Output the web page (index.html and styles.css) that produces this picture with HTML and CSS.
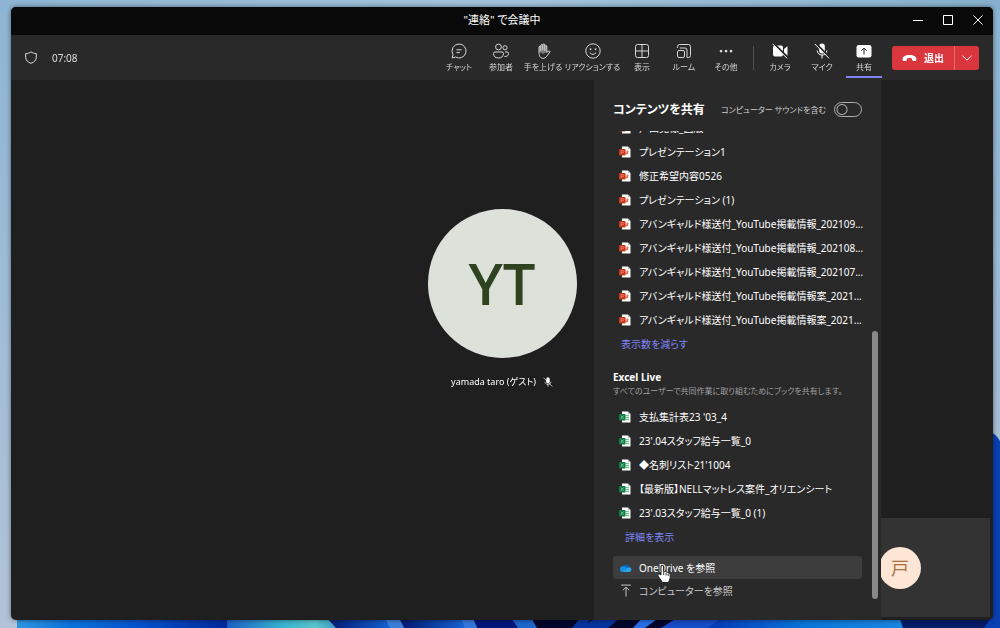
FILE: index.html
```html
<!DOCTYPE html>
<html lang="ja">
<head>
<meta charset="utf-8">
<meta name="viewport" content="width=device-width, initial-scale=1">
<title>"連絡" で会議中</title>
<link rel="stylesheet" href="styles.css">
</head>
<body>
<svg class="wallpaper" viewBox="0 0 1000 628" preserveAspectRatio="none" aria-hidden="true">
  <defs>
    <linearGradient id="sky" x1="0" y1="0" x2="0" y2="1"><stop offset="0" stop-color="#8db5d3"/><stop offset="1" stop-color="#b2c3d8"/></linearGradient>
    <linearGradient id="top" x1="0" y1="0" x2="1" y2="0"><stop offset="0" stop-color="#8db5d3"/><stop offset=".5" stop-color="#a3c3dc"/><stop offset="1" stop-color="#86b0cd"/></linearGradient>
    <linearGradient id="b1" x1="0" y1="0" x2="1" y2="0"><stop offset="0" stop-color="#2f97e0"/><stop offset=".25" stop-color="#0a72dc"/><stop offset=".6" stop-color="#0550cc"/><stop offset="1" stop-color="#02289a"/></linearGradient>
    <linearGradient id="b2" x1="0" y1="0" x2="1" y2="0"><stop offset="0" stop-color="#1d5fc4"/><stop offset=".5" stop-color="#37b2d0"/><stop offset=".8" stop-color="#5ac4cc"/><stop offset="1" stop-color="#389cc4"/></linearGradient>
    <linearGradient id="b3" x1="0" y1="0" x2="1" y2="0"><stop offset="0" stop-color="#02156c"/><stop offset="1" stop-color="#1766d8"/></linearGradient>
    <linearGradient id="b4" x1="0" y1="0" x2="1" y2="0"><stop offset="0" stop-color="#0638b8"/><stop offset=".5" stop-color="#0a76da"/><stop offset="1" stop-color="#1a86e0"/></linearGradient>
  </defs>
  <path fill="url(#sky)" d="M0 0h1000v628H0z"/>
  <path fill="url(#top)" d="M0 0h1000v10H0z"/>
  <path fill="url(#b1)" d="M17 616h211v12H17z"/>
  <path fill="url(#b2)" d="M227 616h110v12H227z"/>
  <path fill="url(#b3)" d="M325 616h62l6 12h-57z"/>
  <path fill="#3c80dc" d="M384 616h14l6 12h-14z"/>
  <path fill="url(#b3)" d="M398 616h64l5 12h-63z"/>
  <path fill="#3578dc" d="M460 616h12l5 12h-12z"/>
  <path fill="#02167c" d="M472 616h40l8 12h-43z"/>
  <path fill="#1e65cc" d="M510 616h20l8 12h-20z"/>
  <path fill="#01062c" d="M530 616h195l-10 12H537z"/>
  <path fill="#06349f" d="M582 616h12l-12 12h-10zM600 616h22l-14 12h-30z"/>
  <path fill="#286fe6" d="M644 616h17l-16 12h-12z"/>
  <path fill="#174bca" d="M680 616h47l-16 12h-50z"/>
  <path fill="url(#b4)" d="M724 616h175l6 12H708z"/>
  <path fill="#041b68" d="M899 616h101v12h-97z"/>
  <path fill="#0a40b4" d="M988 430q8 4 12 11v187h-16l8-12z"/>
</svg>

<div class="window">
  <header class="titlebar">
    <h1 class="title">"連絡" で会議中</h1>
    <div class="window-buttons">
      <button class="winbtn" aria-label="最小化"><svg viewBox="0 0 10 10"><path d="M0 5.500h10"/></svg></button>
      <button class="winbtn" aria-label="最大化"><svg viewBox="0 0 10 10"><path d="M.5.500h9v9h-9z"/></svg></button>
      <button class="winbtn" aria-label="閉じる"><svg viewBox="0 0 10 10"><path d="M.5.500l9 9M9.500.500l-9 9"/></svg></button>
    </div>
  </header>

  <div class="toolbar">
    <div class="status">
      <svg class="shield" viewBox="0 0 12 13" aria-hidden="true"><path d="M6 .8C7.500 2 9.200 2.500 11.300 2.600V6.200C11.300 9.200 9.300 11.300 6 12.300 2.700 11.300.7 9.200.7 6.200V2.600C2.800 2.500 4.500 2 6 .8z"/></svg>
      <span class="timer">07:08</span>
    </div>
    <nav class="tools">
      <button class="tool"><svg viewBox="0 0 16 16"><path d="M8 1a7 7 0 1 1-3.400 13.100L1.200 15l.8-3.400A7 7 0 0 1 8 1zM5.500 6.800h5M5.500 9.500h3.300"/></svg>チャット</button>
      <button class="tool"><svg viewBox="0 0 16 16"><circle cx="5.500" cy="4" r="2.900"/><circle cx="12" cy="4.800" r="2.100"/><path d="M2 9h7q1.500 0 1.500 1.500C10.500 13.200 8.800 15 5.500 15S.5 13.200.5 10.500Q.5 9 2 9zM12 9h2q1.500 0 1.500 1.300c0 2.200-1.500 3.500-4 3.200"/></svg>参加者</button>
      <button class="tool"><svg viewBox="0 0 16 16"><path class="soft" d="M4 9V3.800q.9-1.300 1.800 0V2.200q1-1.400 2 0V1.500q1-1.200 2 0v1.600q1-1.200 2 0v6.200L8 11z"/><path d="M4 9V3.800q.9-1.300 1.800 0V8M5.800 4V2.200q1-1.400 2 0V7.500M7.800 2V1.500q1-1.200 2 0V8M9.800 3.100q1-1.200 2 0v6.200l1.300-1q1-.6 2 .3l-3.600 5q-1 1.700-3.500 1.700C5.300 15.300 4 13 4 9"/></svg>手を上げる</button>
      <button class="tool tool-wide"><svg viewBox="0 0 16 16"><circle cx="8" cy="8" r="7.200"/><path d="M4.800 9.600q3.200 3.500 6.400 0"/><path class="fill" d="M5.500 5.200a.9.9 0 1 0 .1 0zM10.500 5.200a.9.9 0 1 0 .1 0z"/></svg>リアクションする</button>
      <button class="tool"><svg viewBox="0 0 16 16"><rect x="1.500" y="1.500" width="13" height="13" rx="2"/><path d="M8 1.500v13M1.500 8h13"/></svg>表示</button>
      <button class="tool"><svg viewBox="0 0 16 16"><path d="M1.500 5V3.500q0-2 2-2h9q2 0 2 2v9q0 2-2 2H11"/><rect x="1.500" y="7.500" width="7" height="7" rx="1.500"/><path d="M3.800 5h5.200q2 0 2 2v7.500"/></svg>ルーム</button>
      <button class="tool"><svg viewBox="0 0 16 16"><path class="fill" d="M3 6.700a1.400 1.400 0 1 0 .1 0zM8 6.700a1.400 1.400 0 1 0 .1 0zM13 6.700a1.400 1.400 0 1 0 .1 0z"/></svg>その他</button>
      <span class="divider"></span>
      <button class="tool"><svg viewBox="0 0 16 16"><path class="fill" d="M3 2.500h6q2 0 2 2v7q0 2-2 2H3q-2 0-2-2v-7q0-2 2-2zM12 6l3.500-2.700v9.400L12 10z"/><path class="cut" d="M1.500.2l14.300 14.300"/><path d="M.5.800l14.500 14.500"/></svg>カメラ</button>
      <button class="tool"><svg viewBox="0 0 16 16"><path class="fill" d="M8 .5a2.800 2.800 0 0 1 2.800 2.800v4.400a2.800 2.800 0 0 1-5.600 0V3.300A2.800 2.800 0 0 1 8 .5z"/><path d="M3.200 7.500c0 6 9.600 6 9.600 0M8 12v3.500"/><path class="cut" d="M1.700.2l14 14.300"/><path d="M.8 1l14.200 14.300"/></svg>マイク</button>
      <button class="tool active"><svg viewBox="0 0 16 16"><rect class="fill" x=".5" y="2" width="15" height="12.500" rx="2.300"/><path class="dark" d="M8 11.500V5.300M5.300 7.800L8 5.100l2.700 2.700"/></svg>共有</button>
    </nav>
    <div class="leave-group">
      <button class="leave"><svg viewBox="0 0 16 8" aria-hidden="true"><path d="M8 .8c4.800 0 7.500 1.900 7.400 4.600 0 1.400-.7 2-1.800 1.800l-1.900-.4c-.7-.1-1-.5-1.100-1.200l-.2-1.300q-2.400-.8-4.800 0l-.2 1.300c-.1.700-.4 1.100-1.100 1.200l-1.900.4C1.300 7.400.6 6.800.6 5.400.5 2.700 3.200.8 8 .8z"/></svg>退出</button>
      <button class="leave-more" aria-label="退出オプション"><svg viewBox="0 0 10 6"><path d="M.5.8L5 5.200 9.500.8"/></svg></button>
    </div>
  </div>

  <main class="stage">
    <figure class="participant">
      <div class="avatar">YT</div>
      <figcaption class="name">yamada taro (ゲスト)
        <svg viewBox="0 0 16 16" aria-hidden="true"><path class="fill" d="M8 .5a2.800 2.800 0 0 1 2.800 2.800v4.400a2.800 2.800 0 0 1-5.600 0V3.300A2.800 2.800 0 0 1 8 .5z"/><path d="M3.200 7.500c0 6 9.600 6 9.600 0M8 12v3.500M.8 1l14.200 14.300"/></svg>
      </figcaption>
    </figure>

    <div class="self-view"><div class="self-avatar">戸</div></div>

    <aside class="panel">
      <div class="panel-head">
        <h2 class="panel-title">コンテンツを共有</h2>
        <label class="sound" for="sound">コンピューター サウンドを含む</label>
        <input class="toggle" type="checkbox" role="switch" id="sound">
      </div>
      <div class="scroll">
        <ul class="files">
          <li><button class="file"><svg viewBox="0 0 12 12"><use href="#ppt"/></svg>戸田覚様_図版</button></li>
          <li><button class="file"><svg viewBox="0 0 12 12"><use href="#ppt"/></svg>プレゼンテーション1</button></li>
          <li><button class="file"><svg viewBox="0 0 12 12"><use href="#ppt"/></svg>修正希望内容0526</button></li>
          <li><button class="file"><svg viewBox="0 0 12 12"><use href="#ppt"/></svg>プレゼンテーション (1)</button></li>
          <li><button class="file"><svg viewBox="0 0 12 12"><use href="#ppt"/></svg>アバンギャルド様送付_YouTube掲載情報_202109...</button></li>
          <li><button class="file"><svg viewBox="0 0 12 12"><use href="#ppt"/></svg>アバンギャルド様送付_YouTube掲載情報_202108...</button></li>
          <li><button class="file"><svg viewBox="0 0 12 12"><use href="#ppt"/></svg>アバンギャルド様送付_YouTube掲載情報_202107...</button></li>
          <li><button class="file"><svg viewBox="0 0 12 12"><use href="#ppt"/></svg>アバンギャルド様送付_YouTube掲載情報案_2021...</button></li>
          <li><button class="file"><svg viewBox="0 0 12 12"><use href="#ppt"/></svg>アバンギャルド様送付_YouTube掲載情報案_2021...</button></li>
        </ul>
        <a class="more" href="#less">表示数を減らす</a>
        <h3 class="section-title">Excel Live</h3>
        <p class="section-note">すべてのユーザーで共同作業に取り組むためにブックを共有します。</p>
        <ul class="files">
          <li><button class="file"><svg viewBox="0 0 12 12"><use href="#xls"/></svg>支払集計表23 '03_4</button></li>
          <li><button class="file"><svg viewBox="0 0 12 12"><use href="#xls"/></svg>23'.04スタッフ給与一覧_0</button></li>
          <li><button class="file"><svg viewBox="0 0 12 12"><use href="#xls"/></svg>◆名刺リスト21'1004</button></li>
          <li><button class="file"><svg viewBox="0 0 12 12"><use href="#xls"/></svg>【最新版】NELLマットレス案件_オリエンシート</button></li>
          <li><button class="file"><svg viewBox="0 0 12 12"><use href="#xls"/></svg>23'.03スタッフ給与一覧_0 (1)</button></li>
        </ul>
        <a class="more more-indent" href="#more">詳細を表示</a>
        <div class="browse-list">
          <button class="browse hovered"><svg viewBox="0 0 12 12"><path fill="#0a5eb8" d="M3.500 4.500a3.200 3.200 0 0 1 5.800.8L6 9z"/><path fill="#1490df" d="M2.800 4.700q2-.6 3.700 1L11 8.500 9 10.500H3A2.900 2.900 0 0 1 2.800 4.700z"/><path fill="#28a8ea" d="M3 10.500L9 5.600a2.500 2.500 0 0 1 .5 4.900z"/></svg>OneDrive を参照
            <svg class="cursor" viewBox="0 0 14 18" aria-hidden="true"><path d="M4 10V2q0-1.500 1.300-1.500T6.600 2v4.500q2.200-.8 2.700.6 1.700-.5 2 .8 1.900-.2 1.900 1.500V13L11.500 17.500H5.500L1 11q-.5-1.500.7-1.900T4 10z"/><path class="lines" d="M6.700 7v3M9 8v2.500M11.200 8.500V11"/></svg>
          </button>
          <button class="browse"><svg viewBox="0 0 12 12"><path d="M1.200.6h9.600M6 12V2.800M2.800 5.800L6 2.600l3.200 3.200"/></svg>コンピューターを参照</button>
        </div>
      </div>
      <span class="scrollbar"></span>
    </aside>
  </main>
</div>

<svg class="defs" aria-hidden="true">
  <symbol id="ppt" viewBox="0 0 12 12"><path fill="#fff" d="M3 .5h6L11.500 3v8.500H3z"/><path fill="#bdbdbd" d="M9 .5L11.500 3H9z"/><path fill="#e8785e" d="M7.500 4.600A1.900 1.900 0 1 1 5.600 6.500h1.900zM8.100 4.200q1.700.1 1.800 1.800H8.100z"/><rect fill="#c8381d" x="0" y="3" width="6.500" height="6.500" rx=".8"/><path fill="none" stroke="#e88f7c" stroke-width=".8" d="M2.300 8V4.600h1.400q1 0 1 1t-1 1H2.300"/></symbol>
  <symbol id="xls" viewBox="0 0 12 12"><path fill="#fff" d="M3 .5h6L11.500 3v8.500H3z"/><path fill="#bdbdbd" d="M9 .5L11.500 3H9z"/><path fill="#6fbd93" d="M6.500 4H10v1.200H6.500zM6.500 6H10v1.200H6.500zM6.500 8H10v1.200H6.500z"/><rect fill="#107c41" x="0" y="3" width="6.500" height="6.500" rx=".8"/><path fill="none" stroke="#8fcfab" stroke-width=".8" d="M2 4.700l2.500 3.200M4.500 4.700L2 7.900"/></symbol>
</svg>
</body>
</html>
```
FILE: styles.css
```css
* { box-sizing: border-box; }

body {
  margin: 0;
  min-height: 100vh;
  display: flex;
  padding: 7px 7px 8px 11px;
  background: #a3bfd8;
  color: #fff;
  font-family: "Noto Sans", "Noto Sans CJK JP", sans-serif;
  font-size: 10px;
  line-height: 16px;
  font-feature-settings: "palt";
}

h1, h2, h3, p, ul, figure { margin: 0; padding: 0; }
ul { list-style: none; }

button {
  font: inherit;
  font-feature-settings: inherit;
  color: inherit;
  background: none;
  border: 0;
  padding: 0;
  text-align: left;
  white-space: nowrap;
}

svg { fill: none; stroke: currentColor; flex: none; }
.fill { fill: currentColor; stroke: none; }
.defs { position: absolute; width: 0; height: 0; stroke: none; }
.wallpaper { position: fixed; inset: 0; width: 100%; height: 100%; stroke: none; }

.window {
  position: relative;
  flex: 1;
  display: flex;
  flex-direction: column;
  overflow: hidden;
  border-radius: 5px;
  background: #1f1f1f;
  box-shadow: 0 0 5px rgba(0, 0, 0, .5);
}

/* Title bar */
.titlebar {
  display: grid;
  grid-template-columns: 1fr auto 1fr;
  align-items: center;
  height: 28px;
  padding-bottom: 2px;
  background: #090909;
}
.title { grid-column: 2; font-size: 11px; font-weight: 400; }
.window-buttons { display: flex; justify-content: flex-end; }
.winbtn { display: flex; justify-content: center; width: 30px; }
.winbtn svg { width: 10px; height: 10px; }

/* Meeting toolbar */
.toolbar {
  display: flex;
  align-items: center;
  height: 45px;
  padding: 0 14px;
  background: #292929;
}
.status { display: flex; align-items: center; gap: 15px; flex: 1; color: #ddd; }
.shield { width: 12px; height: 13px; }
.timer { font-size: 10px; }
.tools { display: flex; align-items: center; height: 100%; }
.tool {
  display: flex;
  flex-direction: column;
  align-items: center;
  gap: 2px;
  width: 42px;
  height: 45px;
  padding-top: 8px;
  font-size: 8px;
  line-height: 12px;
  color: #d6d6d6;
}
.tool-wide { width: 57px; }
.tool svg { width: 16px; height: 16px; }
.soft { fill: #777; stroke: none; }
.cut { stroke: #292929; stroke-width: 2; }
.dark { stroke: #292929; }
.divider { width: 1px; height: 24px; margin: 0 5px 0 6px; background: #505050; }
.divider ~ .tool svg { color: #fff; }
.active {
  background: linear-gradient(#7f85f5, #7f85f5) center 41px / 36px 2px no-repeat;
}
.leave-group {
  display: flex;
  margin-left: 7px;
  border-radius: 3px;
  overflow: hidden;
  background: #d9363e;
}
.leave {
  display: flex;
  align-items: center;
  justify-content: center;
  gap: 7px;
  width: 62px;
  height: 24px;
  font-size: 10px;
  font-weight: 700;
}
.leave svg { width: 15px; height: 8px; fill: #fff; stroke: none; }
.leave-more {
  display: flex;
  align-items: center;
  justify-content: center;
  width: 25px;
  border-left: 1px solid #e8686d;
}
.leave-more svg { width: 10px; height: 6px; }

/* Stage */
.stage {
  position: relative;
  flex: 1;
  display: flex;
  justify-content: center;
  align-items: center;
}
.participant {
  display: flex;
  flex-direction: column;
  align-items: center;
  gap: 16px;
  padding-bottom: 102px;
}
.avatar {
  display: flex;
  align-items: center;
  justify-content: center;
  width: 149px;
  height: 149px;
  border-radius: 50%;
  background: #dce2d9;
  color: #2f4321;
  font-family: "Open Sans", "Noto Sans", sans-serif;
  font-size: 58px;
  font-weight: 600;
}
.name { display: flex; align-items: center; gap: 7px; font-size: 9px; }
.name svg { width: 10px; height: 10px; }

.self-view {
  position: absolute;
  right: 3px;
  bottom: 3px;
  display: flex;
  align-items: center;
  justify-content: center;
  width: 180px;
  height: 99px;
  background: #333;
}
.self-avatar {
  display: flex;
  align-items: center;
  justify-content: center;
  width: 42px;
  height: 42px;
  border-radius: 50%;
  background: #fde6d5;
  color: #a8703f;
  font-size: 18px;
}

/* Share panel */
.panel {
  position: absolute;
  top: 0;
  bottom: 0;
  right: 112px;
  display: flex;
  flex-direction: column;
  width: 287px;
  padding: 0 19px 18px;
  background: #292929;
}
.panel-head { display: flex; align-items: center; height: 51px; padding-top: 8px; gap: 8px; }
.panel-title { flex: 1; font-size: 12px; line-height: 20px; white-space: nowrap; }
.sound { font-size: 8px; color: #d0d0d0; white-space: nowrap; }
.toggle {
  appearance: none;
  flex: none;
  width: 28px;
  height: 15px;
  margin: 0;
  border: 1px solid #adadad;
  border-radius: 8px;
  background: radial-gradient(circle at 7px 50%, transparent 4px, #adadad 5px, transparent 6px);
}
.scroll {
  flex: 1;
  min-height: 0;
  display: flex;
  flex-direction: column;
  justify-content: flex-end;
  overflow: hidden;
  margin-right: -8px;
  padding-right: 8px;
}
.file {
  display: flex;
  align-items: center;
  gap: 8px;
  height: 24px;
  width: 100%;
  padding-left: 6px;
}
.file svg { width: 12px; height: 12px; stroke: none; }
.more { padding: 4px 8px; color: #7f85f5; text-decoration: none; }
.more-indent { padding: 4px 12px; }
.section-title { margin-top: 14px; font-size: 10px; line-height: 14px; }
.section-note { margin-bottom: 7px; font-size: 8px; line-height: 14px; color: #a0a0a0; white-space: nowrap; }
.browse-list { padding-top: 7px; }
.browse {
  position: relative;
  display: flex;
  align-items: center;
  gap: 7px;
  width: 100%;
  height: 23px;
  padding-left: 7px;
  border-radius: 3px;
  color: #c8c8c8;
}
.browse svg { width: 12px; height: 13px; }
.hovered { background: #3d3d3d; color: #fff; }
.hovered svg { stroke: none; }
.browse .cursor {
  position: absolute;
  left: 44px;
  top: 9px;
  width: 14px;
  height: 18px;
  fill: #fff;
  stroke: #222;
  z-index: 1;
}
.lines { stroke: #333; }
.scrollbar {
  position: absolute;
  right: 3px;
  top: 251px;
  bottom: 21px;
  width: 6px;
  border-radius: 3px;
  background: #888;
}
```
